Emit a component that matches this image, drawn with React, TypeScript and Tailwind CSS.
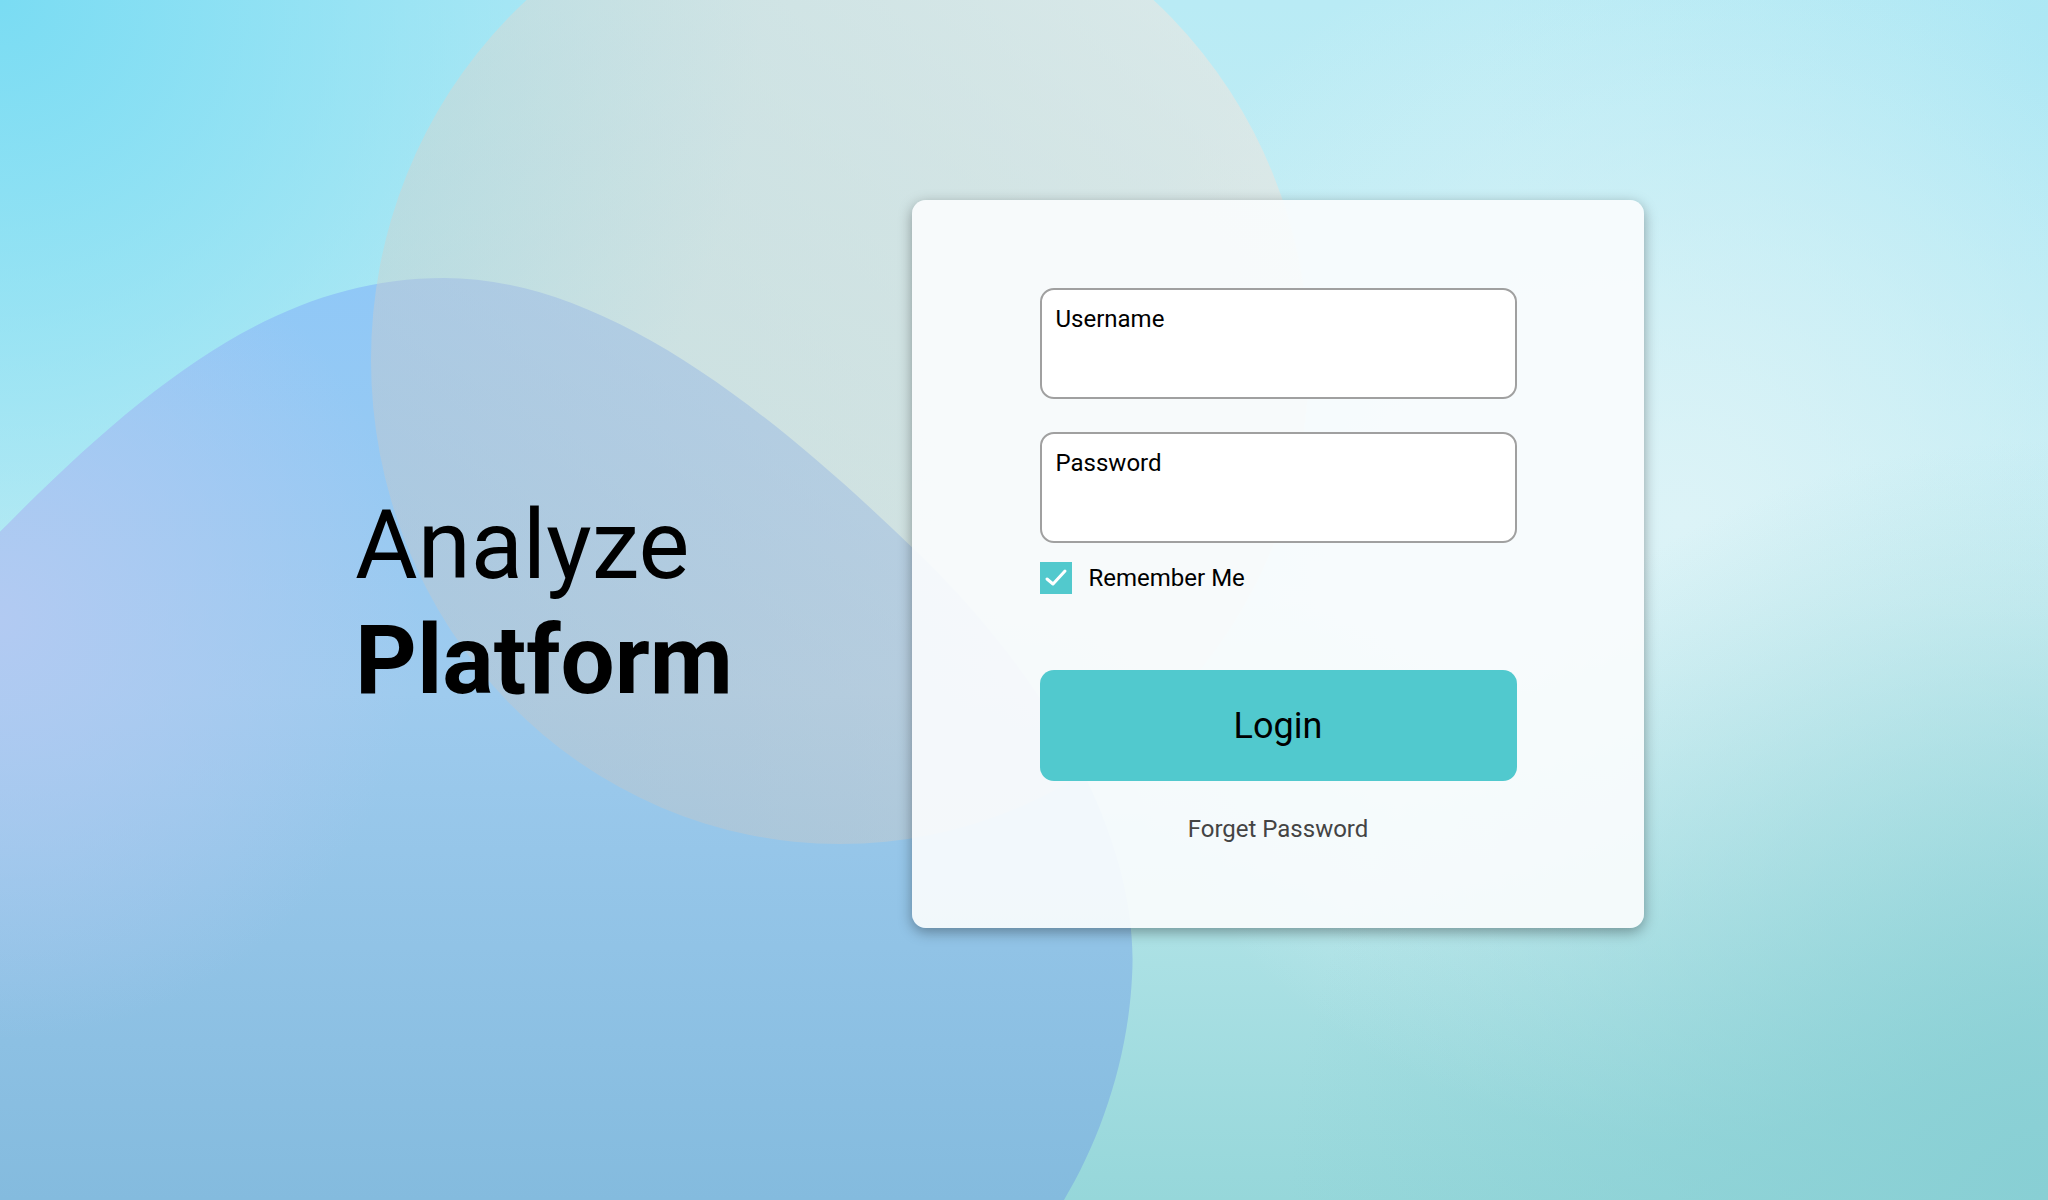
import { useState } from 'react';

function Backdrop() {
  return (
    <svg
      className="absolute inset-0 h-full w-full"
      viewBox="0 0 2048 1200"
      preserveAspectRatio="none"
      aria-hidden="true"
    >
      <defs>
        <linearGradient id="base" x1="0" y1="0" x2="0" y2="1">
          <stop offset="0" stopColor="#b9ebf5" />
          <stop offset="0.5" stopColor="#c9eef3" />
          <stop offset="1" stopColor="#96d7da" />
        </linearGradient>
        <radialGradient id="tl" cx="0" cy="0" r="760" gradientUnits="userSpaceOnUse">
          <stop offset="0" stopColor="#7adcf3" />
          <stop offset="1" stopColor="#7adcf3" stopOpacity="0" />
        </radialGradient>
        <radialGradient id="tr" cx="2048" cy="60" r="560" gradientUnits="userSpaceOnUse">
          <stop offset="0" stopColor="#ace7f4" />
          <stop offset="1" stopColor="#ace7f4" stopOpacity="0" />
        </radialGradient>
        <radialGradient id="glow" cx="1680" cy="520" r="620" gradientUnits="userSpaceOnUse">
          <stop offset="0" stopColor="#dcf3f7" />
          <stop offset="1" stopColor="#dcf3f7" stopOpacity="0" />
        </radialGradient>
        <radialGradient id="br" cx="2048" cy="1200" r="760" gradientUnits="userSpaceOnUse">
          <stop offset="0" stopColor="#88cfd4" />
          <stop offset="1" stopColor="#88cfd4" stopOpacity="0" />
        </radialGradient>
        <linearGradient id="blue" x1="0" y1="278" x2="0" y2="1200" gradientUnits="userSpaceOnUse">
          <stop offset="0" stopColor="#90c8f7" />
          <stop offset="0.45" stopColor="#9ecbee" />
          <stop offset="1" stopColor="#84bbde" />
        </linearGradient>
        <radialGradient id="lav" cx="0" cy="620" r="420" gradientUnits="userSpaceOnUse">
          <stop offset="0" stopColor="#b2caf2" />
          <stop offset="1" stopColor="#b2caf2" stopOpacity="0" />
        </radialGradient>
        <linearGradient id="beige" x1="1150" y1="0" x2="450" y2="760" gradientUnits="userSpaceOnUse">
          <stop offset="0" stopColor="#ece6e0" stopOpacity="0.6" />
          <stop offset="1" stopColor="#cdc3b9" stopOpacity="0.3" />
        </linearGradient>
      </defs>
      <rect width="2048" height="1200" fill="url(#base)" />
      <rect width="2048" height="1200" fill="url(#tl)" />
      <rect width="2048" height="1200" fill="url(#tr)" />
      <rect width="2048" height="1200" fill="url(#glow)" />
      <rect width="2048" height="1200" fill="url(#br)" />
      <path
        d="M0,532 C150,380 280,278 444,278 C600,278 760,400 918,553 C1060,690 1140,850 1132,977 C1128,1060 1100,1140 1064,1200 L0,1200 Z"
        fill="url(#blue)"
      />
      <path
        d="M0,532 C150,380 280,278 444,278 C600,278 760,400 918,553 C1060,690 1140,850 1132,977 C1128,1060 1100,1140 1064,1200 L0,1200 Z"
        fill="url(#lav)"
      />
      <ellipse cx="840" cy="360" rx="469" ry="484" fill="url(#beige)" />
    </svg>
  );
}

function Field({ label }: { label: string }) {
  return (
    <div className="h-[111px] w-full rounded-[14px] border-2 border-[#a0a0a0] bg-white px-[14px] pt-[11px] text-[24px] leading-[1.5] text-black">
      {label}
    </div>
  );
}

export default function App() {
  const [remember, setRemember] = useState(true);

  return (
    <div
      className="relative h-[1200px] w-[2048px] overflow-hidden"
      style={{ fontFamily: 'Roboto, "Noto Sans", sans-serif' }}
    >
      <Backdrop />
      <div className="relative flex pt-[200px]">
        <div className="w-[912px] pl-[355px] pt-[288px] text-[96px] leading-[1.2] text-black">
          <div className="font-normal">Analyze</div>
          <div className="font-bold">Platform</div>
        </div>

        <div className="h-[728px] w-[732px] rounded-[14px] bg-[rgba(250,252,253,0.92)] shadow-[0_4px_14px_rgba(0,0,0,0.35)]">
          <div className="mx-auto flex w-[477px] flex-col pt-[88px]">
            <Field label="Username" />
            <div className="mt-[33px]">
              <Field label="Password" />
            </div>

            <button
              type="button"
              onClick={() => setRemember(!remember)}
              className="mt-[19px] flex items-center gap-[17px] text-[24px] leading-none text-black"
            >
              <span className="flex h-[32px] w-[32px] items-center justify-center bg-[#52c9cd]">
                {remember && (
                  <svg width="24" height="24" viewBox="0 0 24 24" fill="none">
                    <path d="M3 13l6 5L21 5" stroke="white" strokeWidth="3" strokeLinecap="round" strokeLinejoin="round" />
                  </svg>
                )}
              </span>
              Remember Me
            </button>

            <button
              type="button"
              className="mt-[76px] h-[111px] w-full rounded-[14px] bg-[#51c9ce] text-[36px] text-black"
            >
              Login
            </button>

            <div className="mt-[30px] text-center text-[24px] leading-[1.5] text-[#444]">Forget Password</div>
          </div>
        </div>
      </div>
    </div>
  );
}
